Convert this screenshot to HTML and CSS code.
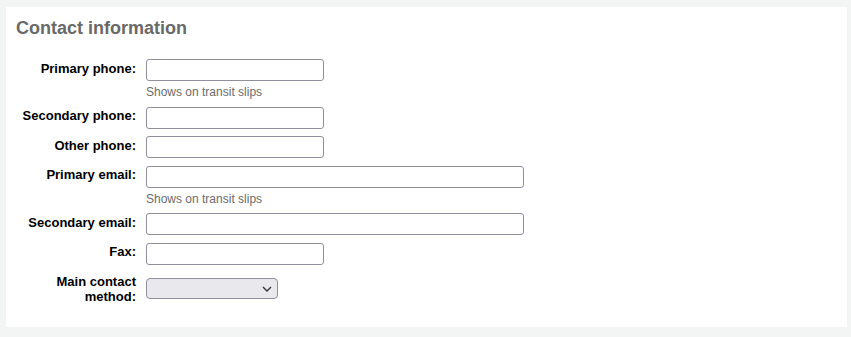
FILE: index.html
```html
<!DOCTYPE html>
<html lang="en">
<head>
    <meta charset="UTF-8">
    <meta name="viewport" content="width=device-width, initial-scale=1.0">
    <title>Contact information</title>
    <link rel="stylesheet" href="styles.css">
</head>
<body>
    <div class="panel">
        <h2 class="legend">Contact information</h2>
        <ol class="fields">
            <li class="field">
                <label for="phone">Primary phone:</label>
                <div class="control">
                    <input type="text" id="phone" class="text-input short">
                    <div class="hint">Shows on transit slips</div>
                </div>
            </li>
            <li class="field">
                <label for="phonepro">Secondary phone:</label>
                <div class="control">
                    <input type="text" id="phonepro" class="text-input short">
                </div>
            </li>
            <li class="field">
                <label for="mobile">Other phone:</label>
                <div class="control">
                    <input type="text" id="mobile" class="text-input short">
                </div>
            </li>
            <li class="field">
                <label for="email">Primary email:</label>
                <div class="control">
                    <input type="text" id="email" class="text-input long">
                    <div class="hint">Shows on transit slips</div>
                </div>
            </li>
            <li class="field">
                <label for="emailpro">Secondary email:</label>
                <div class="control">
                    <input type="text" id="emailpro" class="text-input long">
                </div>
            </li>
            <li class="field">
                <label for="fax">Fax:</label>
                <div class="control">
                    <input type="text" id="fax" class="text-input short">
                </div>
            </li>
            <li class="field">
                <label for="primarycontactmethod">Main contact method:</label>
                <div class="control">
                    <span class="select-wrap">
                        <select id="primarycontactmethod" class="select">
                            <option value=""></option>
                            <option value="phone">Primary phone</option>
                            <option value="phonepro">Secondary phone</option>
                            <option value="mobile">Other phone</option>
                            <option value="email">Primary email</option>
                            <option value="emailpro">Secondary email</option>
                            <option value="fax">Fax</option>
                        </select>
                        <svg class="chevron" width="10" height="6" viewBox="0 0 10 6">
                            <path d="M1 1 L5 5 L9 1" fill="none" stroke="#333" stroke-width="1.4"/>
                        </svg>
                    </span>
                </div>
            </li>
        </ol>
    </div>
</body>
</html>
```

FILE: styles.css
```css
body {
    font-family: "Liberation Sans", Arial, sans-serif;
    font-size: 13px;
    background-color: #f3f4f4;
    margin: 0;
    padding: 7px 4px 10px 6px;
}
.panel {
    background-color: #ffffff;
    padding: 10px 10px 23px 10px;
}
.legend {
    margin: 0 0 20px 0;
    font-size: 18px;
    line-height: 22px;
    font-weight: bold;
    color: #696969;
}
.fields {
    list-style: none;
    margin: 0;
    padding: 0;
}
.field {
    display: flex;
    align-items: flex-start;
    margin-bottom: 7.5px;
}
.field:last-child {
    margin-bottom: 0;
}
.field label {
    width: 120px;
    margin-right: 10px;
    padding-top: 1.5px;
    text-align: right;
    font-weight: bold;
    line-height: 15px;
    color: #000;
}
.control {
    display: flex;
    flex-direction: column;
    align-items: flex-start;
}
.text-input {
    box-sizing: border-box;
    height: 22px;
    border: 1px solid #8f8f9d;
    border-radius: 3px;
    padding: 2px 4px;
    font-family: inherit;
    font-size: 13px;
    background: #fff;
}
.short {
    width: 178px;
}
.long {
    width: 378px;
}
.hint {
    margin-top: 4px;
    font-size: 12px;
    line-height: 14px;
    color: #6c6c6c;
}
.select-wrap {
    position: relative;
    display: inline-block;
    margin-top: 5.5px;
}
.select {
    box-sizing: border-box;
    width: 132px;
    height: 21px;
    border: 1px solid #8f8f9d;
    border-radius: 4px;
    background-color: #e9e9ed;
    appearance: none;
    -webkit-appearance: none;
    font-family: inherit;
    font-size: 13px;
    display: block;
}
.chevron {
    position: absolute;
    right: 6px;
    top: 8px;
    pointer-events: none;
}
```
